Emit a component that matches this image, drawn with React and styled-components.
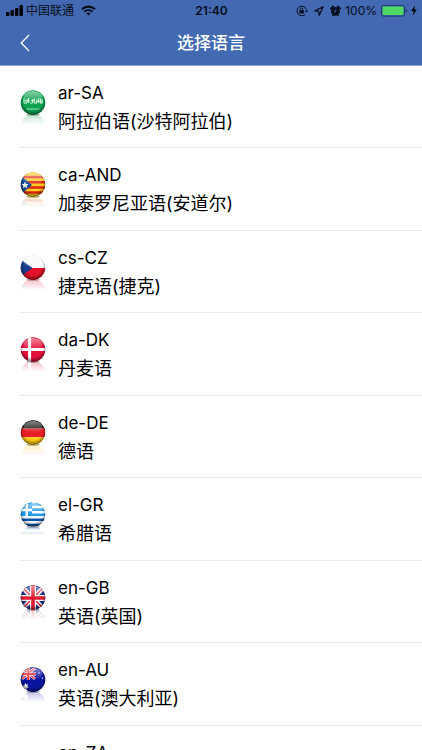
import { useId } from "react";
import styled, { createGlobalStyle } from "styled-components";

const LANGUAGES = [
  { code: "ar-SA", name: "阿拉伯语(沙特阿拉伯)", flag: SaudiFlag },
  { code: "ca-AND", name: "加泰罗尼亚语(安道尔)", flag: CatalanFlag },
  { code: "cs-CZ", name: "捷克语(捷克)", flag: CzechFlag },
  { code: "da-DK", name: "丹麦语", flag: DanishFlag },
  { code: "de-DE", name: "德语", flag: GermanFlag },
  { code: "el-GR", name: "希腊语", flag: GreekFlag },
  { code: "en-GB", name: "英语(英国)", flag: BritishFlag },
  { code: "en-AU", name: "英语(澳大利亚)", flag: AustralianFlag },
  { code: "en-ZA", name: "英语(南非)", flag: SouthAfricanFlag },
];

export default function App() {
  return (
    <>
      <GlobalStyle />
      <Screen>
        <Header>
          <StatusBar />
          <NavBar>
            <BackButton type="button" aria-label="返回">
              <svg width="10" height="18" viewBox="0 0 10 18" fill="none">
                <path d="M9 1 1.2 9 9 17" stroke="#fff" strokeWidth="1.3" />
              </svg>
            </BackButton>
            <Title>选择语言</Title>
          </NavBar>
        </Header>
        <LanguageList>
          {LANGUAGES.map(({ code, name, flag: Flag }) => (
            <LanguageItem key={code}>
              <LanguageButton type="button">
                <FlagBall>
                  <Flag />
                </FlagBall>
                <LanguageText>
                  <LanguageCode>{code}</LanguageCode>
                  <LanguageName>{name}</LanguageName>
                </LanguageText>
              </LanguageButton>
            </LanguageItem>
          ))}
        </LanguageList>
      </Screen>
    </>
  );
}

function StatusBar() {
  return (
    <Status>
      <StatusSide>
        <svg width="17" height="11" viewBox="0 0 17 11">
          <rect x="0" y="7" width="3.4" height="4" rx="1" />
          <rect x="4.5" y="5" width="3.4" height="6" rx="1" />
          <rect x="9" y="3" width="3.4" height="8" rx="1" />
          <rect x="13.5" y="0" width="3.4" height="11" rx="1" />
        </svg>
        <Carrier>中国联通</Carrier>
        <WifiIcon width="15" height="11" viewBox="0 0 15 11" fill="none" stroke="#070d1a">
          <path d="M1 4.2a9.4 9.4 0 0 1 13 0" strokeWidth="2.2" />
          <path d="M3.4 6.8a5.9 5.9 0 0 1 8.2 0" strokeWidth="1.9" />
          <path d="M7.5 10.6 5.4 8.6a3 3 0 0 1 4.2 0z" fill="#070d1a" stroke="none" />
        </WifiIcon>
      </StatusSide>
      <Time>21:40</Time>
      <StatusSide $end>
        <svg width="12" height="12" viewBox="0 0 12 12" fill="none" stroke="#070d1a">
          <path d="M10.4 4.4A4.8 4.8 0 1 0 9 9.6" />
          <path d="M8.8 5.6h3.2l-1.6 2.2z" fill="#070d1a" stroke="none" />
          <rect x="3.4" y="5.2" width="4.4" height="3.4" rx="0.4" fill="#070d1a" stroke="none" />
          <path d="M4.3 5.4V4.3a1.3 1.3 0 0 1 2.6 0v1.1" strokeWidth="0.9" />
        </svg>
        <svg width="10" height="12" viewBox="0 0 10 12" fill="none" stroke="#070d1a">
          <path d="M9.2 1.8 0.9 5.9l3.8 0.5 0.5 3.9z" strokeWidth="1.2" strokeLinejoin="round" />
        </svg>
        <svg width="11" height="12" viewBox="0 0 11 12" fill="none" stroke="#070d1a">
          <circle cx="5.5" cy="6.4" r="4.3" fill="#070d1a" stroke="none" />
          <path d="M0.9 3.7 3.2 1.5M10.1 3.7 7.8 1.5" strokeWidth="1.8" strokeLinecap="round" />
          <path d="M2.4 10.9l1.2-1.6M8.6 10.9 7.4 9.3" strokeWidth="1.2" />
          <path d="M3.8 6.2l1.8 0.6 0.4-2.8" stroke="#4269b1" strokeWidth="0.9" />
        </svg>
        <Percent>100%</Percent>
        <svg width="27" height="12" viewBox="0 0 27 12">
          <rect x="0.5" y="0.5" width="23" height="10.6" rx="2" fill="none" stroke="#1f3a6b" />
          <rect x="1.6" y="1.6" width="20.8" height="8.4" rx="1" fill="#4cd964" />
          <path d="M24.8 3.8v4a2.2 2.2 0 0 0 0-4z" fill="#1f3a6b" />
        </svg>
        <BoltIcon width="6" height="11" viewBox="0 0 6 11">
          <path d="M4 0.4 0.2 6h2.4L1.8 10.6 5.8 4.6H3.3z" />
        </BoltIcon>
      </StatusSide>
    </Status>
  );
}

// Glossy ball with the flag on it and a faded mirror image underneath
function FlagBall({ children }) {
  const id = useId();
  return (
    <Ball width="26" height="36" viewBox="0 0 26 36" aria-hidden="true">
      <defs>
        <clipPath id={`${id}clip`}>
          <circle cx="13" cy="12.6" r="12.3" />
        </clipPath>
        <radialGradient id={`${id}edge`} cx="0.5" cy="0.42" r="0.6">
          <stop offset="0.65" stopColor="#000" stopOpacity="0" />
          <stop offset="1" stopColor="#000" stopOpacity="0.6" />
        </radialGradient>
        <linearGradient id={`${id}gloss`} x1="0" y1="0" x2="0" y2="1">
          <stop offset="0" stopColor="#fff" stopOpacity="0.5" />
          <stop offset="1" stopColor="#fff" stopOpacity="0" />
        </linearGradient>
        <linearGradient id={`${id}fade`} x1="0" y1="25" x2="0" y2="35" gradientUnits="userSpaceOnUse">
          <stop offset="0" stopColor="#fff" stopOpacity="0.26" />
          <stop offset="1" stopColor="#fff" stopOpacity="0" />
        </linearGradient>
        <mask id={`${id}mask`} maskUnits="userSpaceOnUse" x="0" y="24" width="26" height="12">
          <rect y="24" width="26" height="12" fill={`url(#${id}fade)`} />
        </mask>
      </defs>
      <g mask={`url(#${id}mask)`}>
        <g transform="translate(0 49) scale(1 -1)">
          <g clipPath={`url(#${id}clip)`}>{children}</g>
        </g>
      </g>
      <ellipse cx="13" cy="24.6" rx="7" ry="1.2" fill="#000" opacity="0.3" />
      <g clipPath={`url(#${id}clip)`}>
        {children}
        <circle cx="13" cy="12.6" r="12.5" fill={`url(#${id}edge)`} />
        <ellipse cx="13" cy="7" rx="9.5" ry="6" fill={`url(#${id}gloss)`} />
      </g>
    </Ball>
  );
}

function SaudiFlag() {
  return (
    <>
      <rect width="26" height="26" fill="#0fa350" />
      <path
        d="M4 8.5v4.6h3V9M8.6 8v5.2M10 13h2.6V9M11 10.6h4M14.4 8.4v4.8h2.4V9.4M18.6 8.2v5M20.4 8.6v4.6h1.8V9M4.6 11h5.2M16 11.4h6"
        fill="none"
        stroke="#d4f7df"
        strokeWidth="1"
      />
      <path d="M6.5 19h13" stroke="#a5e4bc" strokeWidth="0.9" />
    </>
  );
}

function CatalanFlag() {
  return (
    <>
      <rect width="26" height="26" fill="#ffcb1f" />
      <path d="M0 5h26M0 10.2h26M0 15.4h26M0 20.6h26" stroke="#e0261a" strokeWidth="2.5" />
      <path d="M0 3 12 13 0 23z" fill="#124a9b" />
      <path d="m5 9.6 1 2.4 2.6.1-2 1.6.7 2.5L5 14.8l-2.2 1.4.7-2.5-2-1.6 2.5-.1z" fill="#fff" />
    </>
  );
}

function CzechFlag() {
  return (
    <>
      <rect width="26" height="13" fill="#f8f8fa" />
      <rect y="13" width="26" height="13" fill="#e3122a" />
      <path d="M0 4 12.5 13 0 22z" fill="#173c8c" />
    </>
  );
}

function DanishFlag() {
  return (
    <>
      <rect width="26" height="26" fill="#e5103a" />
      <path d="M9.6 0v26M0 12.6h26" stroke="#fff" strokeWidth="3" />
    </>
  );
}

function GermanFlag() {
  return (
    <>
      <rect width="26" height="8.6" fill="#141212" />
      <rect y="8.6" width="26" height="8.6" fill="#e61e24" />
      <rect y="17.2" width="26" height="9" fill="#ffc814" />
    </>
  );
}

function GreekFlag() {
  return (
    <>
      <rect width="26" height="26" fill="#f4fafe" />
      <path d="M0 2.5h26M0 7.6h26M0 12.7h26" stroke="#1f9be6" strokeWidth="2.6" />
      <path d="M0 17.8h26M0 23h26" stroke="#0d55ab" strokeWidth="2.6" />
      <rect width="12" height="14" fill="#1c97e4" />
      <path d="M6.8 0v14M0 8h12" stroke="#fff" strokeWidth="2.4" />
    </>
  );
}

function BritishFlag() {
  return (
    <>
      <rect width="26" height="26" fill="#1c2b80" />
      <path d="m0 0 26 26M26 0 0 26" stroke="#fff" strokeWidth="4.4" />
      <path d="m0 0 26 26M26 0 0 26" stroke="#e01830" strokeWidth="1.4" />
      <path d="M13 0v26M0 13h26" stroke="#fff" strokeWidth="6" />
      <path d="M13 0v26M0 13h26" stroke="#e01830" strokeWidth="3.6" />
    </>
  );
}

function AustralianFlag() {
  return (
    <>
      <rect width="26" height="26" fill="#0a14a0" />
      <path d="m2 1 13 11M15 1 2 12" stroke="#fff" strokeWidth="2.6" />
      <path d="m2 1 13 11M15 1 2 12" stroke="#e8202c" strokeWidth="1.4" />
      <path d="M8.4 0v13M1 7h15" stroke="#fff" strokeWidth="3.2" />
      <path d="M8.4 0v13M1 7h15" stroke="#e8202c" strokeWidth="2.2" />
      <path d="m5.4 15.8.8 1.9 2-.6-1 1.9 1.6 1.4-2 .4-.1 2.1-1.5-1.5-1.9.9.5-2-1.6-1.3 2.1-.5z" fill="#fff" />
      <circle cx="19" cy="6" r="0.7" fill="#fff" />
      <circle cx="22.4" cy="11" r="0.7" fill="#fff" />
    </>
  );
}

function SouthAfricanFlag() {
  return (
    <>
      <rect width="26" height="13" fill="#d8382c" />
      <rect y="13" width="26" height="13" fill="#123a92" />
      <path d="m0 0 12 13h14M0 26l12-13" fill="none" stroke="#fff" strokeWidth="7" />
      <path d="m0 0 12 13h14M0 26l12-13" fill="none" stroke="#0b7a4b" strokeWidth="4" />
      <path d="M0 5 7 13 0 21z" fill="#111" stroke="#fcb81c" />
    </>
  );
}

const GlobalStyle = createGlobalStyle`
  * {
    box-sizing: border-box;
  }

  body {
    margin: 0;
    background: #ffffff;
    color: #000000;
    font-family: Inter, "Noto Sans CJK SC", sans-serif;
  }

  button {
    border: none;
    background: none;
    padding: 0;
    color: inherit;
    font: inherit;
    cursor: pointer;
  }
`;

const Screen = styled.div`
  display: flex;
  flex-direction: column;
  height: 100vh;
`;

const Header = styled.header`
  flex-shrink: 0;
  background: #4269b1;
  border-bottom: 1px solid #8ba4d0;
`;

const Status = styled.div`
  display: grid;
  grid-template-columns: 1fr auto 1fr;
  align-items: center;
  height: 21px;
  padding: 0 5px 0 6px;
  color: #070d1a;
  font-size: 12px;
  line-height: 20px;

  svg {
    flex-shrink: 0;
  }
`;

const StatusSide = styled.div`
  display: flex;
  align-items: center;
  justify-content: ${({ $end }) => ($end ? "flex-end" : "flex-start")};
  gap: ${({ $end }) => ($end ? "6px" : "3px")};
`;

const Carrier = styled.span`
  font-size: 12px;
`;

const WifiIcon = styled.svg`
  margin-left: 4px;
`;

const BoltIcon = styled.svg`
  margin-left: -3px;
`;

const Time = styled.span`
  font-weight: 600;
`;

const Percent = styled.span`
  margin: 0 -2px;
`;

const NavBar = styled.div`
  display: grid;
  grid-template-columns: 48px 1fr 48px;
  align-items: center;
  height: 44px;
  color: #ffffff;
`;

const BackButton = styled.button`
  display: flex;
  align-items: center;
  height: 44px;
  padding-left: 20px;
`;

const Title = styled.h1`
  margin: 0;
  text-align: center;
  font-size: 17px;
  font-weight: 500;
  line-height: 24px;
`;

const LanguageList = styled.ul`
  flex: 1;
  display: grid;
  grid-auto-rows: minmax(82px, auto) minmax(83px, auto);
  margin: 0;
  padding: 0 0 0 20px;
  list-style: none;
  overflow-y: auto;
  scrollbar-width: none;
`;

const LanguageItem = styled.li`
  border-bottom: 1px solid #e8e8e8;
`;

const LanguageButton = styled.button`
  display: flex;
  align-items: flex-start;
  gap: 12px;
  width: 100%;
  padding: 13px 0 11px;
  text-align: left;
`;

const Ball = styled.svg`
  flex-shrink: 0;
  margin-top: 11px;
`;

const LanguageText = styled.span`
  display: flex;
  flex-direction: column;
  gap: 1px;
`;

const LanguageCode = styled.span`
  font-size: 17px;
  line-height: 28px;
`;

const LanguageName = styled.span`
  font-size: 18px;
  line-height: 28px;
`;
